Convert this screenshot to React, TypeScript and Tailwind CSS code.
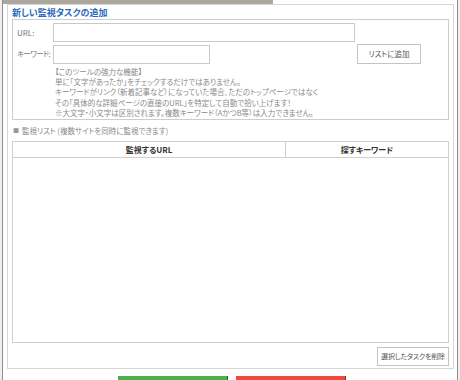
import React, { useState } from 'react';

const jp = "font-['Meiryo','Noto_Sans_CJK_JP',sans-serif] [font-feature-settings:'palt']";

const App: React.FC = () => {
  const [url, setUrl] = useState('');
  const [keyword, setKeyword] = useState('');

  return (
    <div className={`w-[460px] h-[380px] overflow-hidden bg-[#efefef] px-[2px] ${jp}`}>
      <div className="h-full border-x border-[#8f8f8f] bg-white flex flex-col">
        {/* tab strip, cut off at the top */}
        <div className="h-[4px] w-[270px] shrink-0 bg-[#aca79e]" />

        <div className="ml-[4px] mr-[3px] h-[365px] shrink-0 border border-[#d6d6d6] bg-white px-[4px] flex flex-col">
          <div className="h-[14px] flex items-center text-[9px] font-bold text-[#2a68bd] leading-none pt-[1px] whitespace-nowrap">
            新しい監視タスクの追加
          </div>

          {/* add task form */}
          <div className="h-[101px] shrink-0 border border-[#cdcdcd] pt-[3px] pl-[4px] pr-[27px]">
            <div className="flex items-center h-[19px]">
              <span className="w-[36px] shrink-0 text-[8px] text-[#777] whitespace-nowrap">URL:</span>
              <input
                value={url}
                onChange={e => setUrl(e.target.value)}
                className="w-[302px] h-[19px] border border-[#c9c9c9] bg-white outline-none px-1 text-[8px]"
              />
            </div>
            <div className="flex items-center h-[20px] mt-[2px]">
              <span className="w-[36px] shrink-0 text-[7.5px] text-[#777] whitespace-nowrap tracking-[-0.6px]">キーワード:</span>
              <input
                value={keyword}
                onChange={e => setKeyword(e.target.value)}
                className="w-[157px] h-[19px] border border-[#c9c9c9] bg-white outline-none px-1 text-[8px]"
              />
              <div className="flex-1" />
              <button className="w-[64px] h-[20px] shrink-0 border border-[#c4c4c4] bg-white text-[7.5px] text-[#555] whitespace-nowrap">
                リストに追加
              </button>
            </div>
            <div className="mt-[3px] pl-[38px] text-[7.5px] leading-[10.2px] text-[#8a8a8a] whitespace-nowrap">
              <div>【このツールの強力な機能】</div>
              <div>単に「文字があったか」をチェックするだけではありません。</div>
              <div>キーワードがリンク（新着記事など）になっていた場合、ただのトップページではなく</div>
              <div>その「具体的な詳細ページの直接のURL」を特定して自動で拾い上げます！</div>
              <div>※大文字・小文字は区別されます。複数キーワード（AかつB等）は入力できません。</div>
            </div>
          </div>

          <div className="h-[21px] flex items-center pl-[1px] text-[7.5px] text-[#8a8a8a] whitespace-nowrap">
            <span className="text-[6px] mr-[3px] text-[#999]">■</span>
            監視リスト (複数サイトを同時に監視できます)
          </div>

          {/* monitor list */}
          <div className="h-[202px] shrink-0 border border-[#cfcfcf] flex flex-col">
            <div className="flex h-[16px] border-b border-[#cfcfcf] text-[8px] font-bold text-[#333] whitespace-nowrap">
              <div className="w-[273px] border-r border-[#cfcfcf] flex items-center justify-center">監視するURL</div>
              <div className="flex-1 flex items-center justify-center">探すキーワード</div>
            </div>
            <div className="flex-1" />
          </div>

          <div className="flex justify-end mt-[4px]">
            <button className="w-[72px] h-[19px] border border-[#c4c4c4] bg-white text-[7px] text-[#555] whitespace-nowrap tracking-[-0.2px]">
              選択したタスクを削除
            </button>
          </div>
        </div>

        <div className="flex justify-center gap-[8px] mt-[7px] pl-[3px]">
          <button className="w-[110px] h-[10px] bg-[#4cae4f] border-r border-[#2e5e30]" />
          <button className="w-[110px] h-[10px] bg-[#f0483c] border-r border-[#8a2a22]" />
        </div>
      </div>
    </div>
  );
};

export default App;
